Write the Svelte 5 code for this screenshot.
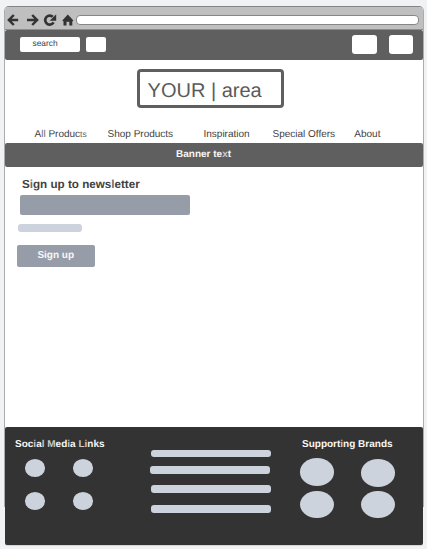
<script>
  const nav = [
    { x: 34.5, parts: [['A', ''], ['ll', 'soft'], [' Produc', ''], ['ts', 'small']] },
    { x: 107.5, parts: [['Shop Products', '']] },
    { x: 203.5, parts: [['Inspiration', '']] },
    { x: 272.5, parts: [['Special Offers', '']] },
    { x: 354.3, parts: [['About', '']] }
  ];
  const social = [['Soc', 0], ['i', 1], ['a', 0], ['l', 1], [' ', 0], ['M', 1], ['ed', 0], ['i', 1], ['a ', 0], ['Li', 1], ['nks', 0]];
</script>

<div class="page">
  <div class="window">
    <div class="chrome">
      <svg width="72" height="22" viewBox="5 7 72 22" fill="none" stroke="#333" stroke-width="2.5">
        <path d="M18.2 20H9.4M13.8 15L8.9 20l4.9 5" />
        <path d="M27 20h9.4M32.2 15l4.9 5-4.9 5" />
        <path d="M53.6 22.4A4.5 4.5 0 1 1 52.8 16.8" stroke-width="2.7" />
        <path d="M56.2 14.2v6.5h-6.5z" fill="#333" stroke="none" />
        <path d="M67.8 14.6L73.4 20.6l-1.1 1V25.6h-3v-3.8h-2.8v3.8h-3v-4l-1.2-1z" fill="#333" stroke="none" />
      </svg>
      <div class="url"></div>
    </div>
    <header>
      <div class="search">search</div>
      <div class="go"></div>
      <div class="tile"></div>
      <div class="tile second"></div>
    </header>
    <div class="logo">YOUR | area</div>
    <nav>
      {#each nav as item}
        <span class="slot"><a style="margin-left:{item.x - 5}px">{#each item.parts as [text, tone]}<span class={tone}>{text}</span>{/each}</a></span>
      {/each}
    </nav>
    <div class="banner">Banner te<span class="dim">x</span>t</div>
    <main>
      <h2>S<span class="soft">i</span>gn up to news<span class="soft">l</span>etter</h2>
      <div class="input"></div>
      <div class="line"></div>
      <button>Sign up</button>
    </main>
    <footer>
      <section class="social">
        <h3>{#each social as [text, dim]}<span class:dim={dim}>{text}</span>{/each}</h3>
        <div class="dots"><i></i><i></i><i></i><i></i></div>
      </section>
      <section class="bars"><i></i><i></i><i></i><i></i></section>
      <section class="brands">
        <h3>Support<span class="dim">i</span>ng Brands</h3>
        <div class="brandgrid"><i></i><i></i><i></i><i></i></div>
      </section>
    </footer>
  </div>
</div>

<style>
  :global(body) { background: #f1f2f4; }
  .page {
    box-sizing: border-box;
    width: 427px;
    height: 549px;
    padding: 6px 3px 0 4px;
    overflow: hidden;
    font-family: "Liberation Sans", Arial, sans-serif;
    color: #414141;
    text-rendering: geometricPrecision;
    background: #f1f2f4;
  }
  .window {
    box-sizing: border-box;
    width: 420px;
    height: 501px;
    border: 1px solid #aaacae;
    border-top-color: #858585;
    border-radius: 5px 5px 0 0;
    background: #fff;
    display: flex;
    flex-direction: column;
  }
  .window > * { flex: none; }
  .chrome {
    box-sizing: border-box;
    height: 23px;
    border-bottom: 1px solid #8d8d8d;
    border-radius: 4px 4px 0 0;
    background: #bfbfbf;
    display: flex;
  }
  .chrome svg { display: block; }
  .url {
    box-sizing: border-box;
    width: 343px;
    height: 10px;
    margin-top: 8px;
    margin-left: -1px;
    border: 1px solid #868686;
    border-radius: 4px;
    background: #fff;
  }
  header {
    height: 30px;
    background: #5f5f5f;
    border-radius: 2px;
    display: flex;
  }
  header div { border-radius: 2px; background: #fff; }
  .search {
    box-sizing: border-box;
    width: 60px;
    height: 15px;
    margin: 7px 0 0 15px;
    padding-left: 12.5px;
    font-size: 8.4px;
    line-height: 12px;
  }
  .go { width: 20px; height: 15px; margin: 7px 0 0 6px; }
  header .tile {
    width: 25px;
    height: 19px;
    margin: 5px 0 0 246px;
    border-radius: 3px;
  }
  header .second { width: 24px; margin-left: 12px; }
  .logo {
    box-sizing: border-box;
    width: 147px;
    height: 39px;
    margin: 9px 0 0 132px;
    padding-left: 7.6px;
    border: 3px solid #5f5f5f;
    border-radius: 4px;
    font-size: 20px;
    line-height: 39px;
    color: #5a5a5a;
    white-space: nowrap;
  }
  nav {
    height: 35px;
    display: grid;
    font-size: 10px;
    line-height: 12px;
  }
  .slot { grid-area: 1 / 1; padding-top: 21px; white-space: pre; }
  .slot:first-child { padding-top: 20px; }
  .soft { color: #6c6c6c; }
  .small { font-size: 8.5px; color: #606060; }
  .banner {
    height: 24px;
    padding-left: 171px;
    border-radius: 2px;
    background: #5f5f5f;
    color: #f7f7f7;
    font-size: 10px;
    font-weight: bold;
    line-height: 24px;
  }
  .dim { color: #cacaca; }
  main { height: 260px; }
  h2 {
    height: 28px;
    margin: 0 0 0 17px;
    font-size: 11.65px;
    line-height: 36px;
  }
  .input {
    width: 170px;
    height: 20px;
    margin-left: 15px;
    border-radius: 2px;
    background: #979da8;
  }
  .line {
    width: 64px;
    height: 8px;
    margin: 9px 0 0 13px;
    border-radius: 3px;
    background: #cdd3dc;
  }
  button {
    display: block;
    width: 77.5px;
    height: 22px;
    margin: 13px 0 0 12px;
    padding: 0 0 1px;
    border: 0;
    border-radius: 2px;
    background: #979da8;
    color: #f6f7f8;
    font: bold 10px/21px "Liberation Sans", Arial, sans-serif;
    text-rendering: geometricPrecision;
  }
  footer {
    height: 118px;
    background: #333;
    border-radius: 2px;
    box-shadow: 0 1px 0 #d5d6d7;
    color: #f7f7f7;
    display: flex;
  }
  h3 {
    margin: 0;
    height: 11px;
    padding-top: 12px;
    font-size: 10px;
    line-height: 12px;
    white-space: pre;
  }
  footer i { display: block; background: #cdd3dc; }
  .social { width: 145px; }
  .social h3 { padding-left: 10px; }
  .dots {
    display: grid;
    grid-template-columns: 20px 20px;
    gap: 15.5px 28.7px;
    margin: 9.2px 0 0 19.5px;
  }
  .dots i { height: 17.6px; border-radius: 50%; }
  .bars { width: 152px; padding-top: 22.5px; }
  .bars i { width: 120px; height: 8px; border-radius: 3px; margin-left: 0.3px; }
  .bars i:first-child { margin-left: 1px; height: 7.5px; }
  .bars i:nth-child(2) { margin-top: 9px; }
  .bars i:nth-child(3) { margin-top: 11px; margin-left: 0.8px; }
  .bars i:nth-child(4) { margin-top: 11.5px; margin-left: 1px; }
  .brandgrid {
    display: grid;
    grid-template-columns: 34px 34px;
    column-gap: 27px;
    row-gap: 4px;
    margin: 8px 0 0 -2px;
  }
  .brandgrid i { height: 27.5px; border-radius: 50%; }
  .brandgrid i:nth-child(2) { margin-top: 1.3px; }
</style>
